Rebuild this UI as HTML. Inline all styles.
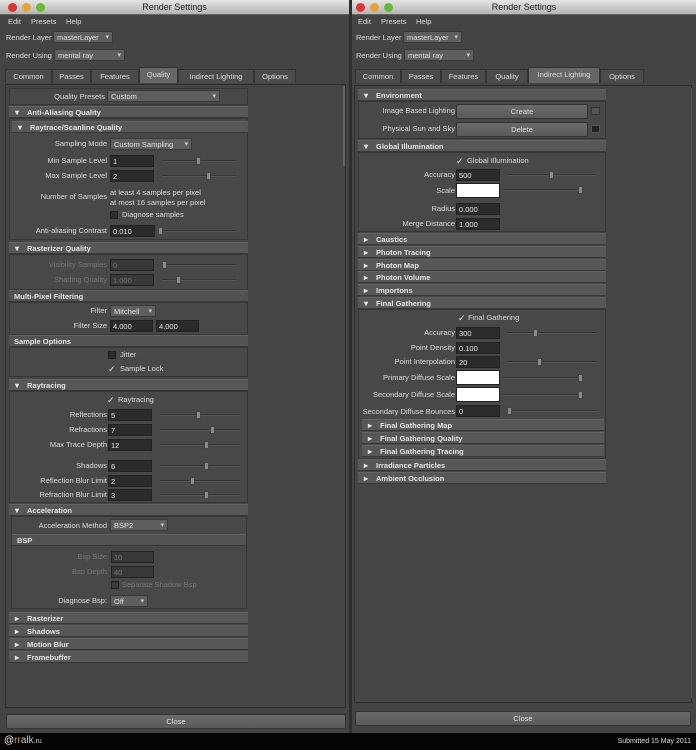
<!DOCTYPE html>
<html><head><meta charset="utf-8"><style>
*{box-sizing:border-box;margin:0;padding:0}
body{width:696px;height:750px;background:#2e2e2e;position:relative;overflow:hidden;font-family:"Liberation Sans",sans-serif;font-size:7.5px;color:#dcdcdc}
.w{position:absolute;top:0;height:733px;background:#444;overflow:hidden}
.w div,.w span{position:absolute;white-space:nowrap}
.tb{left:0;top:0;height:15px;width:100%;background:linear-gradient(#e4e4e4,#b4b4b4);color:#222;font-size:9px;text-align:center;line-height:15px;border-bottom:1px solid #666}
.dot{top:3px;width:9px;height:9px;border-radius:50%}
.m{top:17px;color:#ddd;font-size:7.5px}
.dd{background:#5e5e5e;border:1px solid #3a3a3a;height:12px;line-height:11px;padding-left:3px;color:#e0e0e0}
.dd:after{content:"▾";position:absolute;right:3px;top:0;font-size:7px;color:#ccc}
.tab{top:69px;height:14px;line-height:14px;text-align:center;background:#4b4b4b;border:1px solid #333;border-bottom:none;color:#ddd}
.tab.a{background:#666;top:67px;height:16px}
.pan{border:1px solid #2f2f2f;background:#454545}
.h{height:12px;line-height:12px;background:#575757;border-top:1px solid #636363;border-bottom:1px solid #383838;font-weight:bold;padding-left:18px;color:#e4e4e4}
.h.o:before{content:"▾";position:absolute;left:6px;font-size:8px}
.h.c:before{content:"▸";position:absolute;left:6px;font-size:8px}
.h.s{padding-left:5px;background:#525252}
.fr{border:1px solid #363636;background:#484848}
.lb{left:0;width:107px;text-align:right;height:12px;line-height:12px}
.rb{left:0;width:103px;text-align:right;height:12px;line-height:12px}
.f{background:#2b2b2b;border:1px solid #222;height:12px;line-height:11px;padding-left:2px;color:#e6e6e6}
.wh{background:#fff;border:1px solid #222;height:15px}
.dis{color:#777}
.f.dis{background:#383838}
.sl{height:2px;background:#353535;border-bottom:1px solid #555}
.th{top:-3px;width:5px;height:8px;background:#8a8a8a;border:1px solid #444;border-radius:1px}
.cb{width:8px;height:8px;background:#2d2d2d;border:1px solid #222}
.ck{color:#eee;font-size:9px;line-height:8px}
.btn{background:linear-gradient(#6a6a6a,#5a5a5a);border:1px solid #333;text-align:center;color:#e0e0e0;border-radius:2px}
</style></head><body>

<!-- LEFT WINDOW -->
<div class="w" style="left:0;width:349px">
<div class="tb">Render Settings</div>
<div class="dot" style="left:8px;background:#d33"></div><div class="dot" style="left:22px;background:#e9a13a"></div><div class="dot" style="left:36px;background:#6b3"></div>
<div class="m" style="left:8px">Edit</div><div class="m" style="left:31px">Presets</div><div class="m" style="left:66px">Help</div>
<div style="left:6px;top:32px;line-height:12px">Render Layer</div><div class="dd" style="left:53px;top:31px;width:60px">masterLayer</div>
<div style="left:6px;top:50px;line-height:12px">Render Using</div><div class="dd" style="left:54px;top:49px;width:71px">mental ray</div>
<div class="tab" style="left:5px;width:47px">Common</div><div class="tab" style="left:52px;width:39px">Passes</div><div class="tab" style="left:91px;width:48px">Features</div><div class="tab a" style="left:139px;width:39px">Quality</div><div class="tab" style="left:178px;width:76px">Indirect Lighting</div><div class="tab" style="left:254px;width:42px">Options</div>
<div class="pan" style="left:5px;top:84px;width:341px;height:624px"></div>
<div style="left:343px;top:86px;width:2px;height:80px;background:#666"></div>
<div class="fr" style="left:9px;top:88px;width:239px;height:17px"></div>
<div class="lb" style="top:91px;width:105px">Quality Presets</div><div class="dd" style="left:107px;top:90px;width:113px">Custom</div>
<div class="h o" style="left:9px;top:106px;width:239px">Anti-Aliasing Quality</div>
<div class="fr" style="left:9px;top:118px;width:239px;height:122px"></div>
<div class="h o" style="left:12px;top:121px;width:236px">Raytrace/Scanline Quality</div>
<div class="lb" style="top:138px">Sampling Mode</div><div class="dd" style="left:110px;top:138px;width:82px">Custom Sampling</div>
<div class="lb" style="top:155px">Min Sample Level</div><div class="f" style="left:110px;top:155px;width:44px">1</div><div class="sl" style="left:162px;top:160px;width:74px"><div class="th" style="left:34px"></div></div>
<div class="lb" style="top:170px">Max Sample Level</div><div class="f" style="left:110px;top:170px;width:44px">2</div><div class="sl" style="left:162px;top:175px;width:74px"><div class="th" style="left:44px"></div></div>
<div class="lb" style="top:191px">Number of Samples</div><div style="left:110px;top:188px">at least 4 samples per pixel</div><div style="left:110px;top:198px">at most 16 samples per pixel</div>
<div class="cb" style="left:110px;top:211px"></div><div style="left:122px;top:210px">Diagnose samples</div>
<div class="lb" style="top:225px">Anti-aliasing Contrast</div><div class="f" style="left:110px;top:225px;width:45px">0.010</div><div class="sl" style="left:158px;top:230px;width:78px"><div class="th" style="left:0"></div></div>
<div class="h o" style="left:9px;top:242px;width:239px">Rasterizer Quality</div>
<div class="fr" style="left:9px;top:254px;width:239px;height:36px"></div>
<div class="lb dis" style="top:259px">Visibility Samples</div><div class="f dis" style="left:110px;top:259px;width:44px">0</div><div class="sl" style="left:162px;top:264px;width:74px"><div class="th" style="left:0"></div></div>
<div class="lb dis" style="top:274px">Shading Quality</div><div class="f dis" style="left:110px;top:274px;width:44px">1.000</div><div class="sl" style="left:162px;top:279px;width:74px"><div class="th" style="left:14px"></div></div>
<div class="h s" style="left:9px;top:290px;width:239px">Multi-Pixel Filtering</div>
<div class="fr" style="left:9px;top:302px;width:239px;height:33px"></div>
<div class="lb" style="top:305px">Filter</div><div class="dd" style="left:110px;top:305px;width:46px">Mitchell</div>
<div class="lb" style="top:320px">Filter Size</div><div class="f" style="left:110px;top:320px;width:43px">4.000</div><div class="f" style="left:156px;top:320px;width:43px">4.000</div>
<div class="h s" style="left:9px;top:335px;width:239px">Sample Options</div>
<div class="fr" style="left:9px;top:347px;width:239px;height:30px"></div>
<div class="cb" style="left:108px;top:351px"></div><div style="left:120px;top:350px">Jitter</div>
<div class="ck" style="left:108px;top:365px">✓</div><div style="left:120px;top:364px">Sample Lock</div>
<div class="h o" style="left:9px;top:379px;width:239px">Raytracing</div>
<div class="fr" style="left:9px;top:391px;width:239px;height:112px"></div>
<div class="ck" style="left:107px;top:396px">✓</div><div style="left:118px;top:395px">Raytracing</div>
<div class="lb" style="top:409px">Reflections</div><div class="f" style="left:108px;top:409px;width:44px">5</div><div class="sl" style="left:160px;top:414px;width:80px"><div class="th" style="left:36px"></div></div>
<div class="lb" style="top:424px">Refractions</div><div class="f" style="left:108px;top:424px;width:44px">7</div><div class="sl" style="left:160px;top:429px;width:80px"><div class="th" style="left:50px"></div></div>
<div class="lb" style="top:439px">Max Trace Depth</div><div class="f" style="left:108px;top:439px;width:44px">12</div><div class="sl" style="left:160px;top:444px;width:80px"><div class="th" style="left:44px"></div></div>
<div class="lb" style="top:460px">Shadows</div><div class="f" style="left:108px;top:460px;width:44px">6</div><div class="sl" style="left:160px;top:465px;width:80px"><div class="th" style="left:44px"></div></div>
<div class="lb" style="top:475px">Reflection Blur Limit</div><div class="f" style="left:108px;top:475px;width:44px">2</div><div class="sl" style="left:160px;top:480px;width:80px"><div class="th" style="left:30px"></div></div>
<div class="lb" style="top:489px">Refraction Blur Limit</div><div class="f" style="left:108px;top:489px;width:44px">3</div><div class="sl" style="left:160px;top:494px;width:80px"><div class="th" style="left:44px"></div></div>
<div class="h o" style="left:9px;top:504px;width:239px">Acceleration</div>
<div class="fr" style="left:11px;top:516px;width:236px;height:93px"></div>
<div class="lb" style="top:520px">Acceleration Method</div><div class="dd" style="left:110px;top:519px;width:58px">BSP2</div>
<div class="h s" style="left:12px;top:534px;width:234px">BSP</div>
<div class="lb dis" style="top:551px">Bsp Size</div><div class="f dis" style="left:111px;top:551px;width:43px">10</div>
<div class="lb dis" style="top:566px">Bsp Depth</div><div class="f dis" style="left:111px;top:566px;width:43px">40</div>
<div class="cb" style="left:111px;top:581px;background:#3a3a3a"></div><div class="dis" style="left:122px;top:580px">Separate Shadow Bsp</div>
<div class="lb" style="top:595px">Diagnose Bsp:</div><div class="dd" style="left:110px;top:595px;width:38px">Off</div>
<div class="h c" style="left:9px;top:612px;width:239px">Rasterizer</div>
<div class="h c" style="left:9px;top:625px;width:239px">Shadows</div>
<div class="h c" style="left:9px;top:638px;width:239px">Motion Blur</div>
<div class="h c" style="left:9px;top:651px;width:239px">Framebuffer</div>
<div class="btn" style="left:6px;top:714px;width:340px;height:15px;line-height:14px">Close</div>
</div>

<!-- RIGHT WINDOW -->
<div class="w" style="left:352px;width:344px">
<div class="tb">Render Settings</div>
<div class="dot" style="left:4px;background:#d33"></div><div class="dot" style="left:18px;background:#e9a13a"></div><div class="dot" style="left:32px;background:#6b3"></div>
<div class="m" style="left:6px">Edit</div><div class="m" style="left:29px">Presets</div><div class="m" style="left:64px">Help</div>
<div style="left:4px;top:32px;line-height:12px">Render Layer</div><div class="dd" style="left:51px;top:31px;width:59px">masterLayer</div>
<div style="left:4px;top:50px;line-height:12px">Render Using</div><div class="dd" style="left:52px;top:49px;width:70px">mental ray</div>
<div class="tab" style="left:3px;width:46px">Common</div><div class="tab" style="left:49px;width:40px">Passes</div><div class="tab" style="left:89px;width:45px">Features</div><div class="tab" style="left:134px;width:42px">Quality</div><div class="tab a" style="left:176px;width:72px">Indirect Lighting</div><div class="tab" style="left:248px;width:44px">Options</div>
<div class="pan" style="left:2px;top:85px;width:338px;height:618px"></div>
<div class="h o" style="left:6px;top:89px;width:248px">Environment</div>
<div class="fr" style="left:6px;top:101px;width:248px;height:38px"></div>
<div class="rb" style="top:105px">Image Based Lighting</div><div class="btn" style="left:104px;top:104px;width:132px;height:15px;line-height:14px">Create</div><div style="left:239px;top:107px;width:9px;height:8px;background:#555;border:1px solid #333"></div>
<div class="rb" style="top:123px">Physical Sun and Sky</div><div class="btn" style="left:104px;top:122px;width:132px;height:15px;line-height:14px">Delete</div><div style="left:239px;top:125px;width:9px;height:8px;background:#222;border:1px solid #555"></div>
<div class="h o" style="left:6px;top:140px;width:248px">Global Illumination</div>
<div class="fr" style="left:6px;top:152px;width:248px;height:80px"></div>
<div class="ck" style="left:104px;top:157px">✓</div><div style="left:115px;top:156px">Global Illumination</div>
<div class="rb" style="top:169px">Accuracy</div><div class="f" style="left:104px;top:169px;width:44px">500</div><div class="sl" style="left:155px;top:174px;width:88px"><div class="th" style="left:42px"></div></div>
<div class="rb" style="top:185px">Scale</div><div class="wh" style="left:104px;top:183px;width:44px"></div><div class="sl" style="left:150px;top:189px;width:82px"><div class="th" style="left:76px"></div></div>
<div class="rb" style="top:203px">Radius</div><div class="f" style="left:104px;top:203px;width:44px">0.000</div>
<div class="rb" style="top:218px">Merge Distance</div><div class="f" style="left:104px;top:218px;width:44px">1.000</div>
<div class="h c" style="left:6px;top:233px;width:248px">Caustics</div>
<div class="h c" style="left:6px;top:246px;width:248px">Photon Tracing</div>
<div class="h c" style="left:6px;top:259px;width:248px">Photon Map</div>
<div class="h c" style="left:6px;top:271px;width:248px">Photon Volume</div>
<div class="h c" style="left:6px;top:284px;width:248px">Importons</div>
<div class="h o" style="left:6px;top:297px;width:248px">Final Gathering</div>
<div class="fr" style="left:6px;top:309px;width:248px;height:150px"></div>
<div class="ck" style="left:106px;top:314px">✓</div><div style="left:116px;top:313px">Final Gathering</div>
<div class="rb" style="top:327px">Accuracy</div><div class="f" style="left:104px;top:327px;width:44px">300</div><div class="sl" style="left:155px;top:332px;width:90px"><div class="th" style="left:26px"></div></div>
<div class="rb" style="top:342px">Point Density</div><div class="f" style="left:104px;top:342px;width:44px">0.100</div>
<div class="rb" style="top:356px">Point Interpolation</div><div class="f" style="left:104px;top:356px;width:44px">20</div><div class="sl" style="left:155px;top:361px;width:90px"><div class="th" style="left:30px"></div></div>
<div class="rb" style="top:372px">Primary Diffuse Scale</div><div class="wh" style="left:104px;top:370px;width:44px"></div><div class="sl" style="left:150px;top:377px;width:82px"><div class="th" style="left:76px"></div></div>
<div class="rb" style="top:389px">Secondary Diffuse Scale</div><div class="wh" style="left:104px;top:387px;width:44px"></div><div class="sl" style="left:150px;top:394px;width:82px"><div class="th" style="left:76px"></div></div>
<div class="rb" style="top:406px">Secondary Diffuse Bounces</div><div class="f" style="left:104px;top:405px;width:44px">0</div><div class="sl" style="left:155px;top:410px;width:90px"><div class="th" style="left:0"></div></div>
<div class="h c" style="left:10px;top:419px;width:242px">Final Gathering Map</div>
<div class="h c" style="left:10px;top:432px;width:242px">Final Gathering Quality</div>
<div class="h c" style="left:10px;top:445px;width:242px">Final Gathering Tracing</div>
<div class="h c" style="left:6px;top:459px;width:248px">Irradiance Particles</div>
<div class="h c" style="left:6px;top:472px;width:248px">Ambient Occlusion</div>
<div style="left:339px;top:88px;width:1px;height:610px;background:#555"></div>
<div class="btn" style="left:3px;top:711px;width:336px;height:15px;line-height:14px">Close</div>
</div>

<div style="position:absolute;left:0;top:733px;width:696px;height:17px;background:#050505"></div>
<div style="position:absolute;left:4px;top:735px;font-size:10px;color:#ccc"><span style="color:#eee">@</span><span style="color:#e0a020">rr</span>alk<span style="font-size:7px">.ru</span></div>
<div style="position:absolute;right:5px;top:738px;font-size:7px;color:#ddd">Submitted 15 May 2011</div>
</body></html>
